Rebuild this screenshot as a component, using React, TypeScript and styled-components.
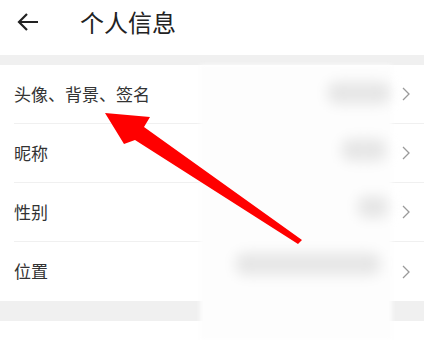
import React from "react";
import styled, { createGlobalStyle } from "styled-components";

const Global = createGlobalStyle`
  html, body { margin: 0; padding: 0; background: #fff; }
  body { font-family: "Noto Sans CJK SC", "Noto Sans", sans-serif; }
`;

const Page = styled.div`
  position: relative;
  width: 424px;
  height: 340px;
  overflow: hidden;
  background: #fff;
`;

const Header = styled.div`
  height: 55px;
  display: flex;
  align-items: center;
  padding-left: 17px;
  gap: 41px;
  padding-bottom: 12px;
  box-sizing: border-box;
`;

const Title = styled.div`
  font-size: 24px;
  color: #222;
  line-height: 1;
  letter-spacing: 0;
`;

const Gap = styled.div<{ $h: number }>`
  height: ${(p) => p.$h}px;
  background: #f0f0f0;
`;

const List = styled.div`
  background: #fff;
`;

const Row = styled.div<{ $last?: boolean }>`
  height: 59px;
  margin-left: 14px;
  display: flex;
  align-items: center;
  justify-content: space-between;
  padding-right: 13px;
  box-sizing: border-box;
  border-bottom: ${(p) => (p.$last ? "none" : "1px solid #f0f0f0")};
`;

const Label = styled.span`
  font-size: 17px;
  color: #333;
  line-height: 1;
  margin-top: -2px;
`;

const Overlay = styled.div`
  position: absolute;
  left: 200px;
  top: 65px;
  width: 192px;
  height: 275px;
  background: #fdfdfd;
  filter: blur(2px);
  display: flex;
  flex-direction: column;
`;

const BlobRow = styled.div`
  height: 59px;
  display: flex;
  align-items: center;
  justify-content: flex-end;
  margin-top: -2px;
`;

const Blob = styled.div<{ $w: number; $right: number }>`
  width: ${(p) => p.$w}px;
  height: 22px;
  margin-right: ${(p) => p.$right}px;
  background: #e6e6e6;
  border-radius: 8px;
  filter: blur(6px);
`;

const ArrowSvg = styled.svg`
  position: absolute;
  left: 0;
  top: 0;
  pointer-events: none;
`;

const Chevron = () => (
  <svg width="10" height="16" viewBox="0 0 10 16">
    <path d="M2 2 L8 8 L2 14" fill="none" stroke="#9a9a9a" strokeWidth="1.3" />
  </svg>
);

const BackArrow = () => (
  <svg width="22" height="20" viewBox="0 0 22 20">
    <path d="M10 2 L2 10 L10 18 M2 10 L21 10" fill="none" stroke="#222" strokeWidth="2.2" />
  </svg>
);

const rows = ["头像、背景、签名", "昵称", "性别", "位置"];
const blobs = [
  { w: 62, right: 2 },
  { w: 44, right: 6 },
  { w: 30, right: 4 },
  { w: 144, right: 12 },
];

export default function App() {
  return (
    <>
      <Global />
      <Page>
        <Header>
          <BackArrow />
          <Title>个人信息</Title>
        </Header>
        <Gap $h={10} />
        <List>
          {rows.map((r, i) => (
            <Row key={r} $last={i === rows.length - 1}>
              <Label>{r}</Label>
              <Chevron />
            </Row>
          ))}
        </List>
        <Gap $h={20} />
        <Overlay>
          {blobs.map((b, i) => (
            <BlobRow key={i}>
              <Blob $w={b.w} $right={b.right} />
            </BlobRow>
          ))}
        </Overlay>
        <ArrowSvg width="424" height="340" viewBox="0 0 424 340">
          <polygon
            points="105,113 150,117 144,127 302,240 298,244 135,140 124,144"
            fill="#ff0000"
          />
        </ArrowSvg>
      </Page>
    </>
  );
}
